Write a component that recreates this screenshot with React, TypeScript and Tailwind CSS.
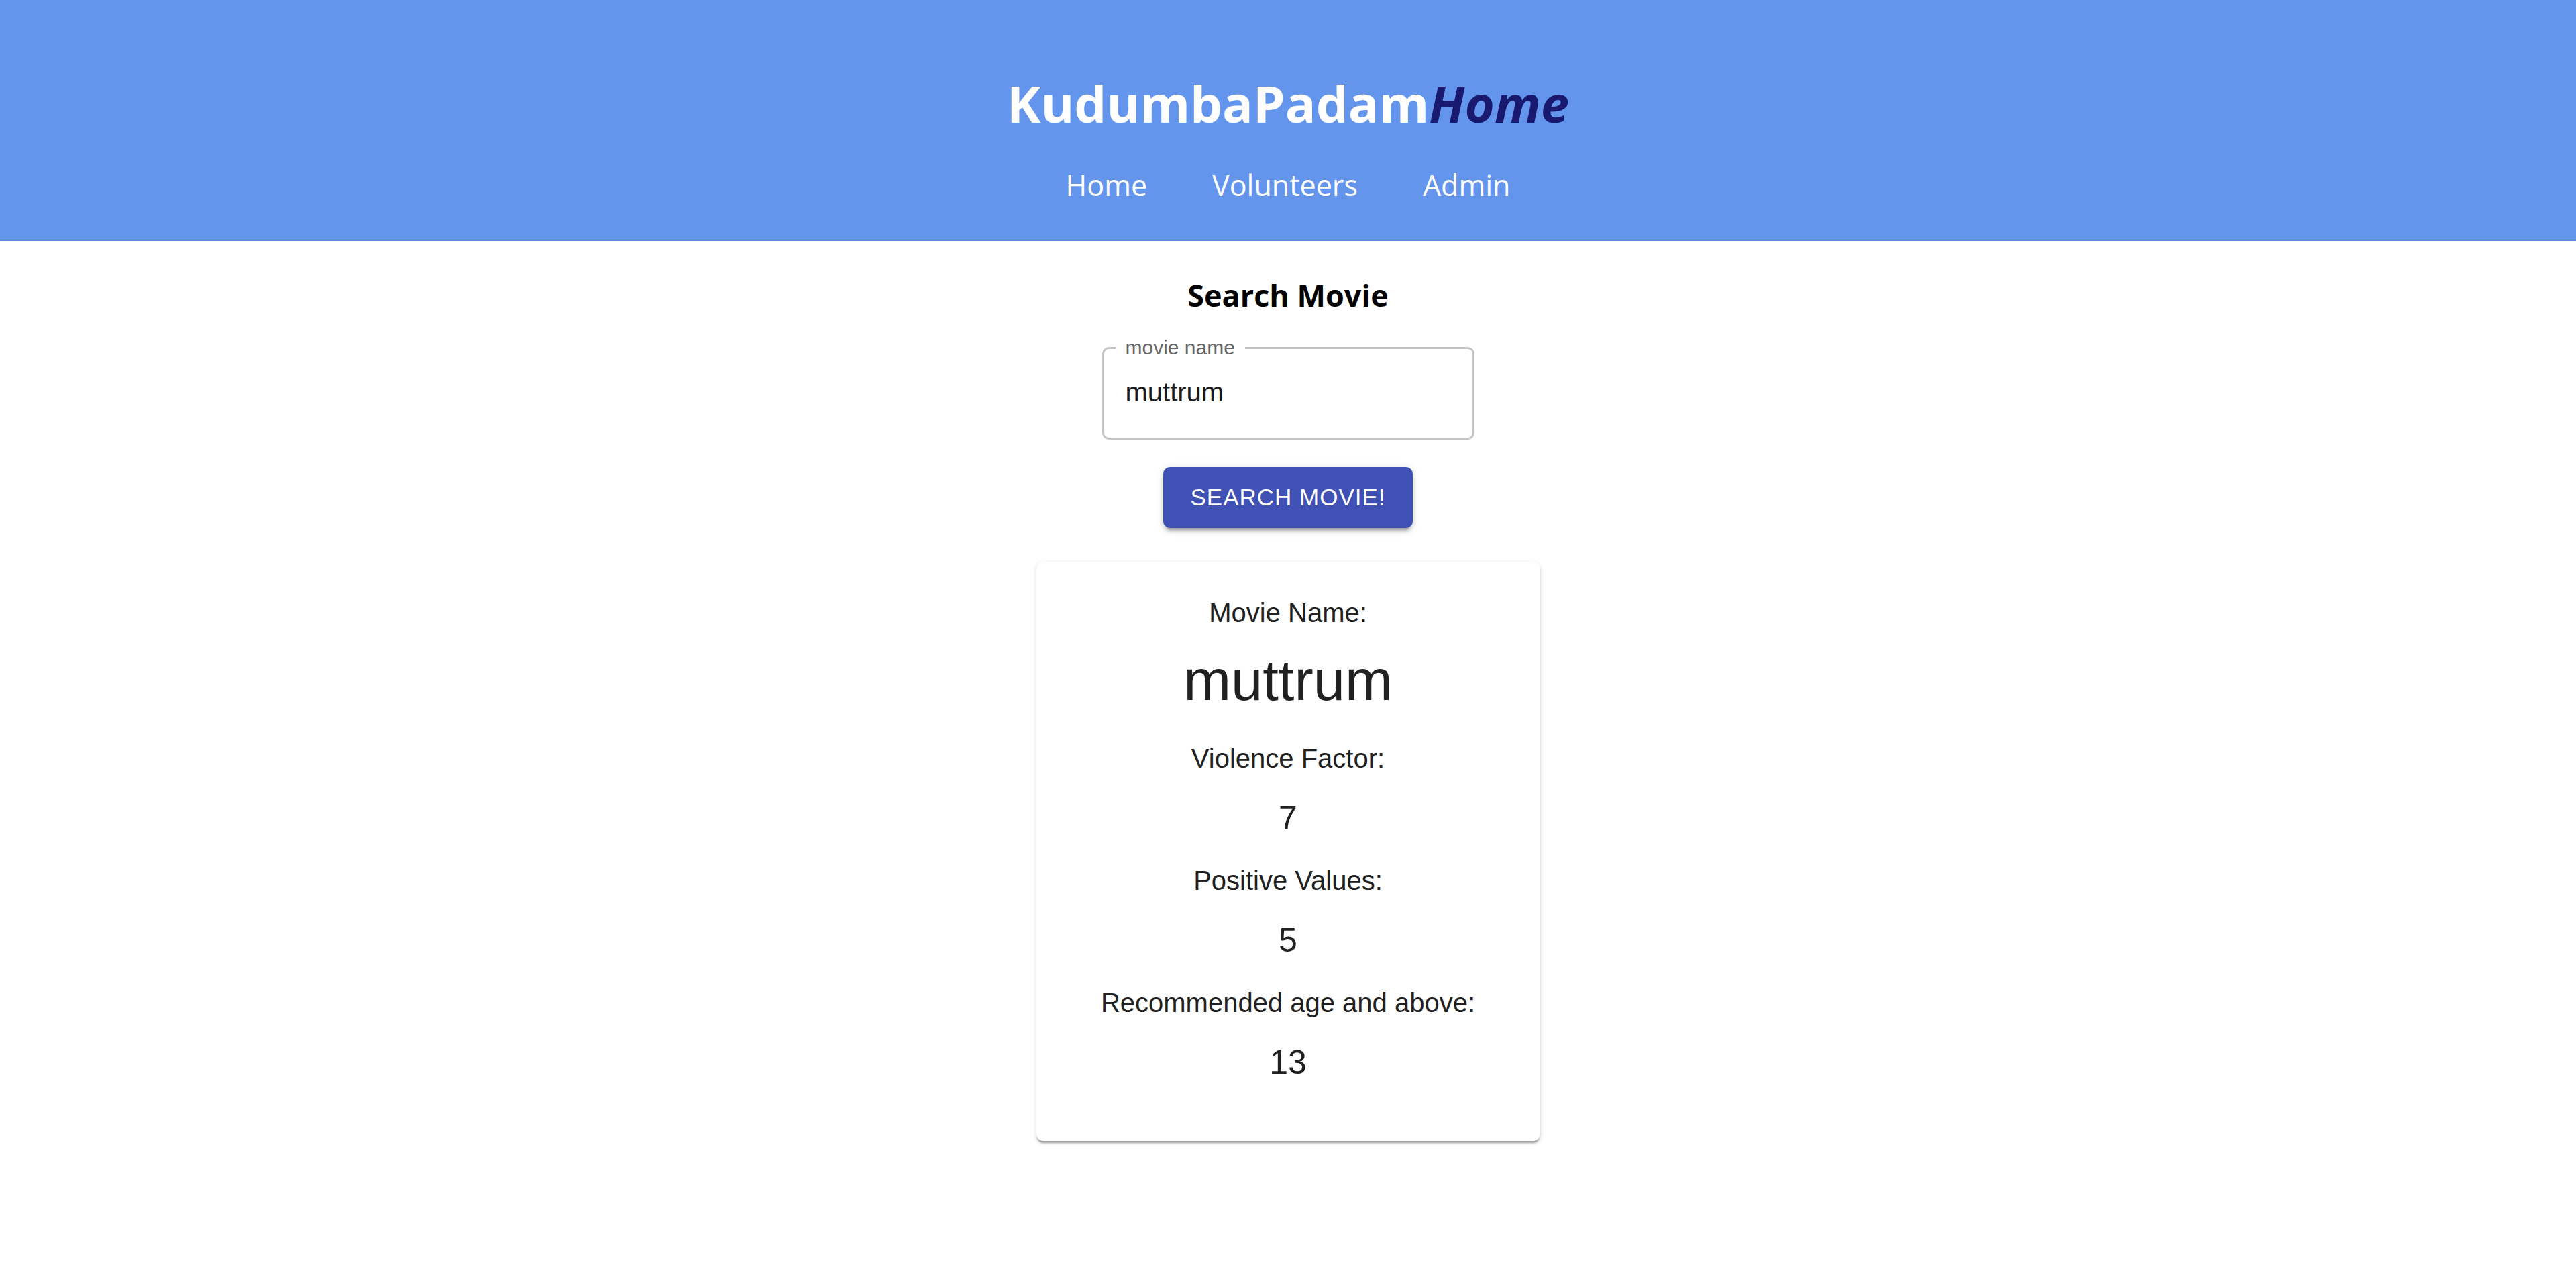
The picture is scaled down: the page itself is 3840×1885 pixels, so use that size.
const MovieInfo = ({ label, value, first }: { label: string; value: string; first?: boolean }) => {
  return (
    <>
      <p className={`text-[40px] leading-[60px] ${first ? '' : 'mt-[23px]'}`}>{label}</p>
      <p className="mt-[19px] text-[50px] leading-[80px]">{value}</p>
    </>
  );
};

const App = () => {
  return (
    <div className="min-h-screen bg-white">
      <header className="flex h-[359px] flex-col items-center bg-[#6495ed] pt-[116px] font-['Open_Sans',sans-serif]">
        <h1 className="text-[76px] font-bold leading-none text-white">
          KudumbaPadam<span className="italic text-[#191970]">Home</span>
        </h1>
        <nav className="mt-[62px] flex gap-[97px] text-[43px] leading-none text-white">
          <a>Home</a>
          <a>Volunteers</a>
          <a>Admin</a>
        </nav>
      </header>

      <main className="flex flex-col items-center font-['Liberation_Sans',Arial,sans-serif]">
        <h3 className="mt-[58px] font-['Open_Sans',sans-serif] text-[45px] font-bold leading-none text-black">
          Search Movie
        </h3>

        <div className="relative mt-[55px] h-[138px] w-[555px] rounded-[10px] border-[3px] border-[#c4c4c4] pl-[32px] pt-[36px]">
          <span className="absolute -top-[17px] left-[17px] bg-white px-[15px] text-[30px] leading-[30px] text-[#666666]">
            movie name
          </span>
          <span className="text-[40px] leading-[57px] text-[#1a1a1a]">muttrum</span>
        </div>

        <button className="mt-[41px] h-[91px] w-[372px] rounded-[10px] bg-[#3f51b5] text-[35px] uppercase tracking-[1px] text-white shadow-[0px_7.5px_2.5px_-5px_rgba(0,0,0,0.2),0px_5px_5px_0px_rgba(0,0,0,0.14),0px_2.5px_12.5px_0px_rgba(0,0,0,0.12)]">
          Search Movie!
        </button>

        <div className="mt-[50px] mb-[180px] flex w-[751px] flex-col items-center rounded-[10px] bg-white pt-[46px] pb-[77px] text-[#212121] shadow-[0px_5px_2.5px_-2.5px_rgba(0,0,0,0.2),0px_2.5px_2.5px_0px_rgba(0,0,0,0.14),0px_2.5px_7.5px_0px_rgba(0,0,0,0.12)]">
          <p className="text-[40px] leading-[60px]">Movie Name:</p>
          <p className="mt-[18px] text-[85px] leading-[105px]">muttrum</p>
          <div className="mt-[11px] flex flex-col items-center">
            <MovieInfo label="Violence Factor:" value="7" />
            <MovieInfo label="Positive Values:" value="5" />
            <MovieInfo label="Recommended age and above:" value="13" />
          </div>
        </div>
      </main>
    </div>
  );
};

export default App;
